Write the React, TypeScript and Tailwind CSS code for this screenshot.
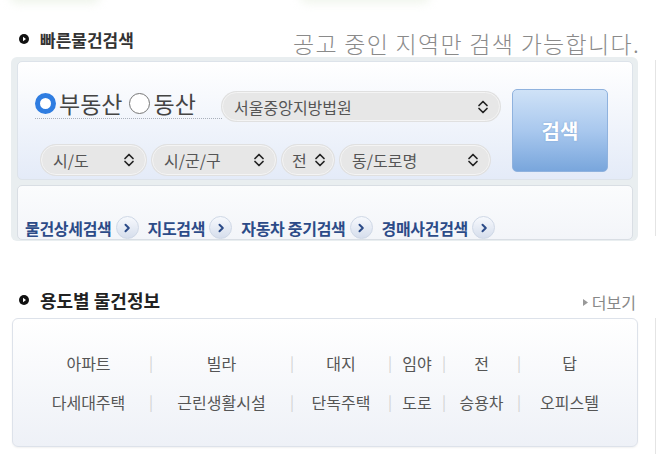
import React from 'react'

const KR = { fontFamily: '"Noto Sans CJK KR", "Noto Sans", sans-serif' }

const Bullet = () => (
  <svg width="10" height="10" viewBox="0 0 10 10" className="shrink-0">
    <circle cx="5" cy="5" r="5" fill="#111" />
    <path d="M4 2.8 L7 5 L4 7.2 Z" fill="#fff" />
  </svg>
)

const UpDown = () => (
  <svg width="14" height="16" viewBox="0 0 14 16" className="shrink-0">
    <path d="M3 6.5 L7 2.5 L11 6.5 M3 9.5 L7 13.5 L11 9.5" fill="none" stroke="#222" strokeWidth="1.7" strokeLinejoin="round" strokeLinecap="round" />
  </svg>
)

const Select = ({ label, className = '' }: { label: string; className?: string }) => (
  <div className={`flex items-center justify-between rounded-full bg-[#e7e7e7] border border-[#f4f4f4] shadow-[0_0_0_1px_#e0e0e0] pl-[11px] pr-[9px] text-[16px] text-[#555] ${className}`}>
    <span className="leading-[22px] whitespace-nowrap">{label}</span>
    <UpDown />
  </div>
)

const Arrow = () => (
  <div className="w-[23px] h-[23px] rounded-full bg-gradient-to-b from-[#f7f9fd] to-[#d6deec] border border-[#cfd8e6] flex items-center justify-center shrink-0">
    <svg width="12" height="12" viewBox="0 0 12 12">
      <path d="M4.5 2.8 L7.8 6 L4.5 9.2" fill="none" stroke="#2c4b88" strokeWidth="2" strokeLinecap="round" strokeLinejoin="round" />
    </svg>
  </div>
)

const links = ['물건상세검색', '지도검색', '자동차 중기검색', '경매사건검색']

const row1 = ['아파트', '빌라', '대지', '임야', '전', '답']
const row2 = ['다세대주택', '근린생활시설', '단독주택', '도로', '승용차', '오피스텔']

const UsageRow = ({ items }: { items: string[] }) => (
  <div className="grid grid-cols-[119px_6px_135px_6px_92px_6px_48px_6px_69px_6px_95px] items-center h-[39px]">
    {items.map((t, i) => (
      <React.Fragment key={t}>
        {i > 0 && <span className="text-center text-[15px] text-[#d2d2d2] leading-none">|</span>}
        <span className="text-center text-[16px] text-[#555] leading-none whitespace-nowrap">{t}</span>
      </React.Fragment>
    ))}
  </div>
)

export default function App() {
  return (
    <div className="relative w-[658px] h-[454px] bg-white overflow-hidden pt-[30px]" style={KR}>
      <div className="absolute left-[10px] -top-[9px] w-[90px] h-[12px] rounded-full bg-[#eef4ea] blur-[5px]" />
      <div className="absolute left-[300px] -top-[9px] w-[130px] h-[12px] rounded-full bg-[#f0f5ec] blur-[5px]" />

      {/* 빠른물건검색 */}
      <div className="flex">
        <div className="w-[655px]">
          <div className="flex items-start justify-between h-[27px] pl-[19px] w-[640px]">
            <div className="flex items-center gap-[11px] h-[18px]">
              <Bullet />
              <span className="text-[17px] font-bold text-[#333] leading-none">빠른물건검색</span>
            </div>
            <span className="-mt-[1px] text-[23px] font-light text-[#8a8a8a] leading-[28px] tracking-[1.3px] whitespace-nowrap">공고 중인 지역만 검색 가능합니다.</span>
          </div>

          <div className="ml-[11px] w-[627px] h-[184px] bg-[#e9eef0] rounded-[6px] pt-[4px] pl-[6px] pr-[5px] flex flex-col gap-[5px]">
            <div className="h-[119px] rounded-[5px] border border-[#dde3ea] bg-gradient-to-b from-white to-[#e4ebf8] flex">
              <div className="pl-[17px] pt-[26px]">
                <div className="flex items-start">
                  <div className="flex items-center h-[31px] w-[187px] border-b border-dotted border-[#a9b0bb] text-[23px] text-[#444] leading-none">
                    <span className="w-[21px] h-[21px] rounded-full border-[5px] border-[#2f7de1] bg-white shrink-0" />
                    <span className="ml-[3px]">부동산</span>
                    <span className="ml-[7px] w-[21px] h-[21px] rounded-full border-[1.5px] border-[#777] bg-white shrink-0" />
                    <span className="ml-[3px]">동산</span>
                  </div>
                  <Select label="서울중앙지방법원" className="mt-[4px] w-[278px] h-[29px]" />
                </div>
                <div className="flex items-center gap-[6px] mt-[24px] pl-[6px]">
                  <Select label="시/도" className="w-[105px] h-[30px]" />
                  <Select label="시/군/구" className="w-[124px] h-[30px]" />
                  <Select label="전" className="w-[52px] h-[30px] !pl-[9px] !pr-[6px]" />
                  <Select label="동/도로명" className="w-[150px] h-[30px]" />
                </div>
              </div>
              <div className="ml-auto mr-[24px] mt-[27px] w-[96px] h-[83px] rounded-[5px] border border-[#8fb2de] bg-gradient-to-b from-[#cfe2f7] via-[#a9c8ee] to-[#79a6dc] flex items-center justify-center">
                <span className="text-[20px] font-bold text-white [text-shadow:0_0_2px_#7aa0d0]">검색</span>
              </div>
            </div>
            <div className="h-[55px] rounded-[5px] border border-[#d9dee4] bg-gradient-to-b from-[#fbfcfd] to-[#f3f5f9] flex items-end pl-[7px]">
              {links.map((l, i) => (
                <div key={l} className={`flex items-end ${i > 0 ? 'ml-[9px]' : ''}`}>
                  <span className="text-[16px] font-bold text-[#2c4b88] leading-[21px] tracking-[-0.3px] whitespace-nowrap">{l}</span>
                  <div className="ml-[4px]"><Arrow /></div>
                </div>
              ))}
            </div>
          </div>
        </div>
        <div className="w-px bg-[#e4e4e4] mt-[30px] h-[176px]" />
      </div>

      {/* 용도별 물건정보 */}
      <div className="flex mt-[49px]">
        <div className="w-[655px]">
          <div className="flex items-start justify-between h-[28px] pl-[19px] w-[640px]">
            <div className="flex items-center gap-[11px] h-[20px]">
              <Bullet />
              <span className="text-[18px] font-bold text-[#222] leading-none">용도별 물건정보</span>
            </div>
            <div className="flex items-center gap-[4px] h-[22px] mt-[1px] mr-[4px]">
              <svg width="5" height="7" viewBox="0 0 5 7"><path d="M0 0 L5 3.5 L0 7 Z" fill="#999" /></svg>
              <span className="text-[16px] text-[#888] leading-none">더보기</span>
            </div>
          </div>
          <div className="ml-[12px] w-[626px] h-[129px] rounded-[6px] border border-[#dde2ea] bg-gradient-to-b from-white to-[#eef1f7] shadow-[0_1px_2px_rgba(0,0,0,0.06)] pl-[16px] pt-[24px]">
            <UsageRow items={row1} />
            <UsageRow items={row2} />
          </div>
        </div>
        <div className="w-px bg-[#e4e4e4] mt-[28px] h-[200px]" />
      </div>
    </div>
  )
}
